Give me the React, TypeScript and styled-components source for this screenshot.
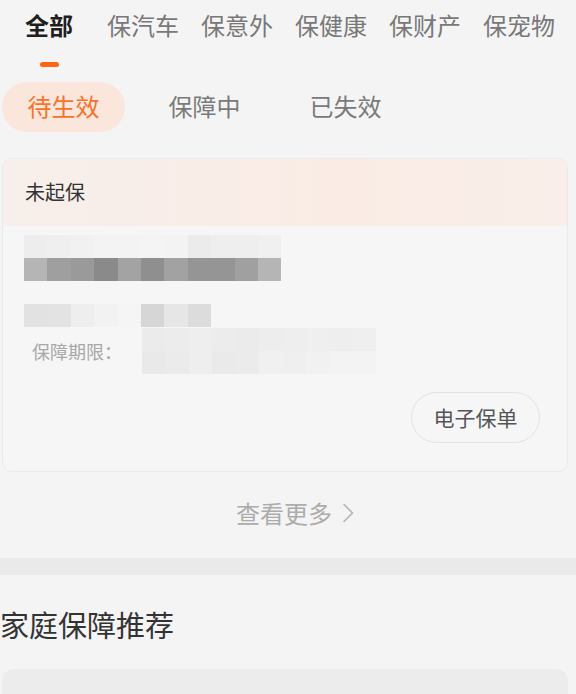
import React from 'react';
import styled, { createGlobalStyle } from 'styled-components';

const GlobalStyle = createGlobalStyle`
  html, body {
    margin: 0;
    padding: 0;
    background: #f4f4f4;
  }
  body {
    font-family: "Noto Sans CJK SC", "Noto Sans", sans-serif;
    overflow: hidden;
  }
`;

const Page = styled.div`
  width: 576px;
  height: 694px;
  overflow: hidden;
`;

// 顶部分类
const TabBar = styled.div`
  display: flex;
  gap: 22px;
  padding: 13px 0 0 25px;
`;

const Tab = styled.div<{ $active?: boolean }>`
  display: flex;
  flex-direction: column;
  align-items: center;
  font-size: 24px;
  line-height: 24px;
  color: ${p => (p.$active ? '#1f1f1f' : '#787878')};
  font-weight: ${p => (p.$active ? 700 : 400)};
  margin-right: ${p => (p.$active ? '12px' : '0')};
`;

const Indicator = styled.div`
  width: 19px;
  height: 5px;
  border-radius: 3px;
  background: #ff6613;
  margin-top: 25px;
`;

// 状态筛选
const StatusRow = styled.div`
  display: flex;
  gap: 18px;
  padding-left: 2px;
  margin-top: 15px;
`;

const Pill = styled.div<{ $active?: boolean }>`
  width: 123px;
  height: 50px;
  border-radius: 25px;
  display: flex;
  align-items: center;
  justify-content: center;
  font-size: 24px;
  line-height: 24px;
  padding-bottom: 2px;
  box-sizing: border-box;
  color: ${p => (p.$active ? '#f4742a' : '#7a7a7a')};
  background: ${p => (p.$active ? '#fae6da' : 'transparent')};
`;

const Card = styled.div`
  margin: 26px 8px 0 2px;
  border: 1px solid #ebebeb;
  border-radius: 10px;
  background: #f6f6f6;
  overflow: hidden;
`;

const CardHeader = styled.div`
  height: 67px;
  display: flex;
  align-items: center;
  padding: 0 0 2px 22px;
  box-sizing: border-box;
  font-size: 20px;
  color: #333;
  background: linear-gradient(to right, #f7efeb, #faece5 60%, #f9eee9);
`;

const CardBody = styled.div`
  padding: 9px 27px 28px 21px;
  display: flex;
  flex-direction: column;
`;

const Mosaic = styled.div`
  display: flex;
  flex-direction: column;
`;

const MosaicRow = styled.div`
  display: flex;
  height: 23px;
`;

const Cell = styled.div<{ $c: string }>`
  width: 23.4px;
  height: 100%;
  background: ${p => p.$c};
`;

const PeriodRow = styled.div`
  display: flex;
  align-items: center;
  margin-top: 1px;
`;

const PeriodLabel = styled.div`
  width: 110px;
  padding-left: 8px;
  font-size: 18px;
  color: #a8a8a8;
`;

const Actions = styled.div`
  display: flex;
  justify-content: flex-end;
  margin-top: 18px;
`;

const OutlineButton = styled.button`
  width: 129px;
  height: 51px;
  border: 1.5px solid #e2e2e2;
  border-radius: 26px;
  background: transparent;
  font-family: inherit;
  font-size: 21px;
  color: #555;
  padding: 0 0 2px;
`;

const MoreLink = styled.div`
  display: flex;
  align-items: center;
  justify-content: center;
  gap: 10px;
  margin-top: 28px;
  padding-left: 14px;
  font-size: 24px;
  line-height: 26px;
  color: #acacac;
`;

const Divider = styled.div`
  height: 17px;
  margin-top: 32px;
  background: #eaeaeb;
`;

const SectionTitle = styled.div`
  margin-top: 34px;
  font-size: 29px;
  line-height: 30px;
  color: #333;
`;

const NextCard = styled.div`
  margin: 30px 8px 0 2px;
  height: 80px;
  border-radius: 12px;
  background: #ececed;
`;

const tabs = ['全部', '保汽车', '保意外', '保健康', '保财产', '保宠物'];
const statuses = ['待生效', '保障中', '已失效'];

const nameTop = ['#ededed', '#efefef', '#f1f1f1', '#f3f3f3', '#f3f3f3', '#f4f4f4', '#f3f3f3', '#ebebeb', '#eeeeee', '#eeeeee', '#f0f0f0'];
const nameMain = ['#b5b5b5', '#9f9f9f', '#9a9a9a', '#8a8a8a', '#a3a3a3', '#8f8f8f', '#a2a2a2', '#959595', '#959595', '#a0a0a0', '#b5b5b5'];
const idRow = ['#e2e2e2', '#e3e3e3', '#eeeeee', '#f2f2f2', '#f5f5f5', '#d6d6d6', '#e6e6e6', '#dcdcdc'];
const dateTop = ['#ebebeb', '#ececec', '#eeeeee', '#ececec', '#ebebeb', '#ededed', '#eeeeee', '#efefef', '#eeeeee', '#efefef'];
const dateBottom = ['#e9e9e9', '#ebebeb', '#eeeeee', '#eaeaea', '#ebebeb', '#f0f0f0', '#efefef', '#f1f1f1', '#f3f3f3', '#f3f3f3'];

const Chevron = () => (
  <svg width="12" height="20" viewBox="0 0 12 20" fill="none">
    <path d="M2 1.5 L10.5 10 L2 18.5" stroke="#b3b3b3" strokeWidth="1.6" strokeLinecap="round" strokeLinejoin="round" />
  </svg>
);

const App = () => {
  return (
    <Page>
      <GlobalStyle />
      <TabBar>
        {tabs.map((t, i) => (
          <Tab key={t} $active={i === 0}>
            {t}
            {i === 0 && <Indicator />}
          </Tab>
        ))}
      </TabBar>

      <StatusRow>
        {statuses.map((s, i) => (
          <Pill key={s} $active={i === 0}>{s}</Pill>
        ))}
      </StatusRow>

      <Card>
        <CardHeader>未起保</CardHeader>
        <CardBody>
          <Mosaic>
            <MosaicRow>
              {nameTop.map((c, i) => <Cell key={i} $c={c} />)}
            </MosaicRow>
            <MosaicRow>
              {nameMain.map((c, i) => <Cell key={i} $c={c} />)}
            </MosaicRow>
            <MosaicRow />
            <MosaicRow>
              {idRow.map((c, i) => <Cell key={i} $c={c} />)}
            </MosaicRow>
          </Mosaic>
          <PeriodRow>
            <PeriodLabel>保障期限：</PeriodLabel>
            <Mosaic>
              <MosaicRow>
                {dateTop.map((c, i) => <Cell key={i} $c={c} />)}
              </MosaicRow>
              <MosaicRow>
                {dateBottom.map((c, i) => <Cell key={i} $c={c} />)}
              </MosaicRow>
            </Mosaic>
          </PeriodRow>
          <Actions>
            <OutlineButton>电子保单</OutlineButton>
          </Actions>
        </CardBody>
      </Card>

      <MoreLink>
        查看更多
        <Chevron />
      </MoreLink>

      <Divider />
      <SectionTitle>家庭保障推荐</SectionTitle>
      <NextCard />
    </Page>
  );
};

export default App;
